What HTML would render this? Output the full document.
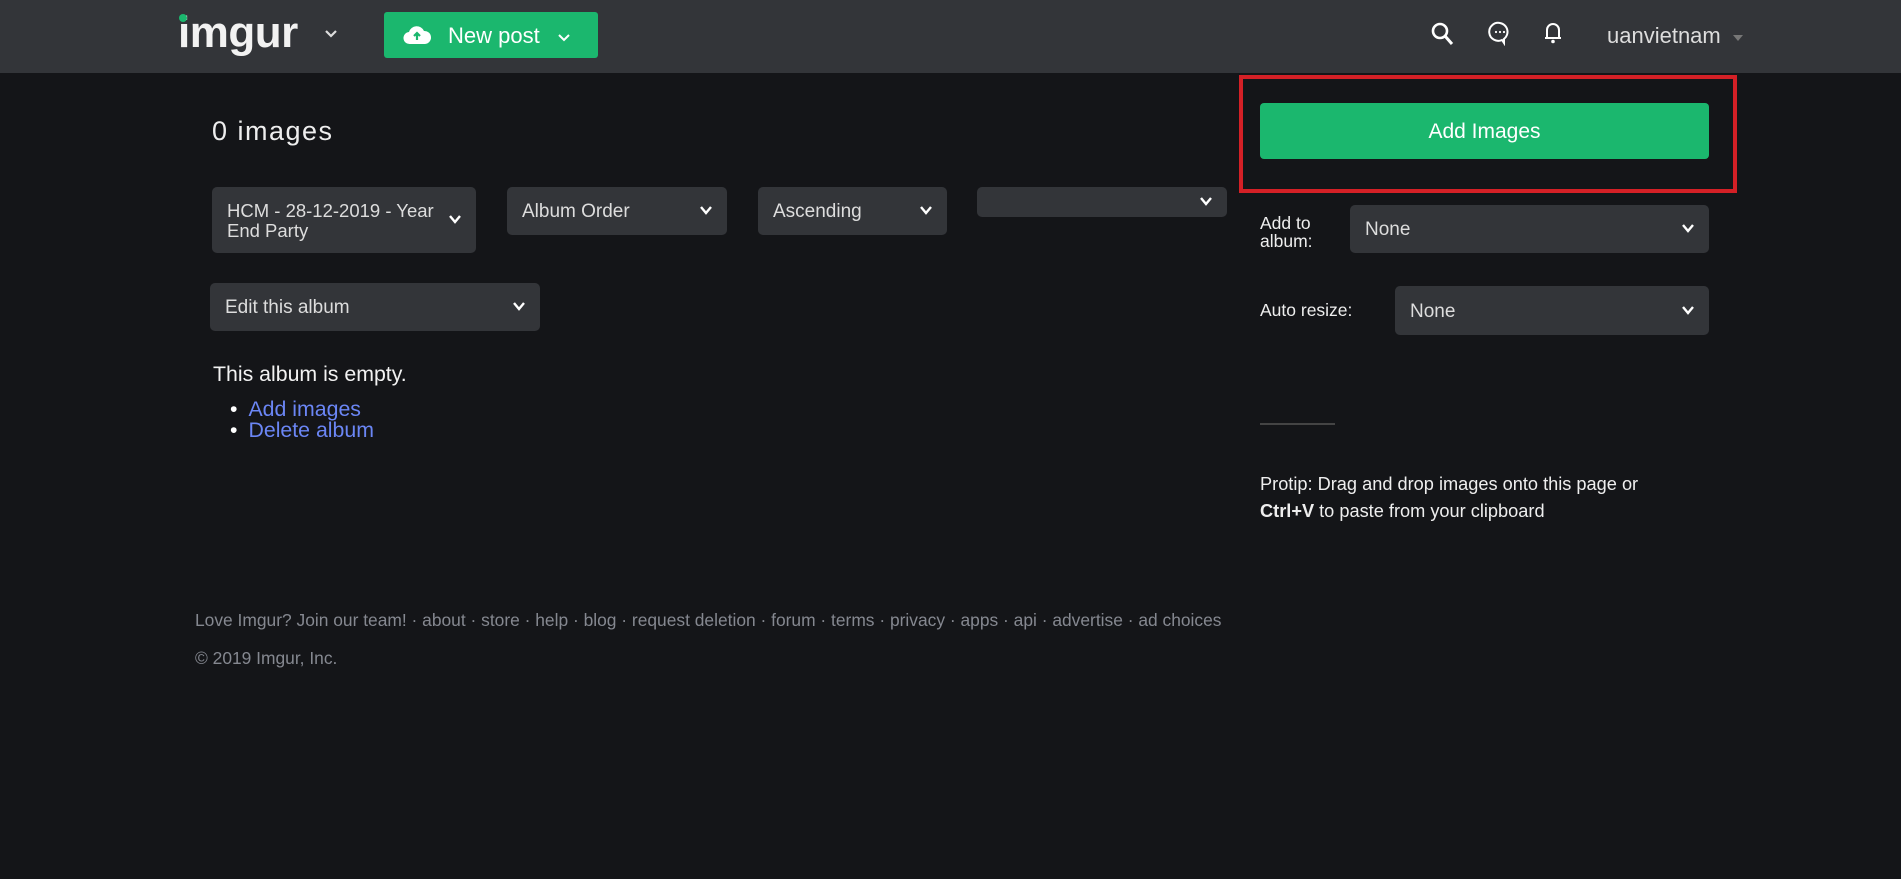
<!DOCTYPE html>
<html><head><meta charset="utf-8"><style>
*{box-sizing:border-box;margin:0;padding:0}
body{width:1901px;height:879px;background:#141518;font-family:"Liberation Sans",sans-serif;color:#fff;position:relative;overflow:hidden}
.a{position:absolute}
.hdr{left:0;top:0;width:1901px;height:73px;background:#333539}
.sel{position:absolute;background:#333539;border-radius:5px;color:#ddd;font-size:19px;padding-left:15px;padding-top:2px;display:flex;align-items:center}
.chev{position:absolute;right:14px;top:50%;margin-top:-6px}
.foot{color:#858890;font-size:17.4px}
a{color:#6b86f5;text-decoration:none}
</style></head><body>
<div class="a hdr"></div>
<div class="a" style="left:178px;top:8px;font-size:44px;font-weight:bold;letter-spacing:-0.5px;color:#f2f2f2">imgur</div>
<div class="a" style="left:179px;top:14px;width:8px;height:8px;border-radius:50%;background:#1bb76e"></div>
<svg class="a" style="left:324px;top:29px" width="14" height="10" viewBox="0 0 14 10"><path d="M2 2l5 5 5-5" stroke="#ddd" stroke-width="2.2" fill="none"/></svg>
<div class="a" style="left:384px;top:12px;width:214px;height:46px;background:#1bb76e;border-radius:3px"></div>
<svg class="a" style="left:402px;top:24px" width="30" height="22" viewBox="0 0 30 22"><path d="M8 20a6 6 0 0 1-1-12 8 8 0 0 1 15-1 6.5 6.5 0 0 1 1 13z" fill="#fff"/><path d="M15 16V9M12 12l3-3 3 3" stroke="#1bb76e" stroke-width="2.2" fill="none"/></svg>
<div class="a" style="left:448px;top:23px;font-size:22px;color:#fff">New post</div>
<svg class="a" style="left:558px;top:33px" width="12" height="9" viewBox="0 0 12 9"><path d="M1 2l5 5 5-5" stroke="#fff" stroke-width="2" fill="none"/></svg>
<svg class="a" style="left:1430px;top:21px" width="26" height="26" viewBox="0 0 26 26"><circle cx="10" cy="10" r="7" stroke="#fff" stroke-width="2.6" fill="none"/><path d="M15 15l7 8" stroke="#fff" stroke-width="3"/></svg>
<svg class="a" style="left:1487px;top:20px" width="26" height="26" viewBox="0 0 26 26"><path d="M13 3a9 9 0 1 0 2 17l2 3v-4a9 9 0 0 0-4-16z" stroke="#fff" stroke-width="2" fill="none"/><circle cx="9" cy="12" r="1.1" fill="#fff"/><circle cx="13" cy="12" r="1.1" fill="#fff"/><circle cx="17" cy="12" r="1.1" fill="#fff"/></svg>
<svg class="a" style="left:1542px;top:20px" width="22" height="26" viewBox="0 0 22 26"><path d="M5 18V10a6 6 0 0 1 12 0v8zM3 18h16" stroke="#fff" stroke-width="2" fill="none"/><circle cx="11" cy="21.5" r="1.8" fill="#fff"/></svg>
<div class="a" style="left:1607px;top:23px;font-size:22px;color:#ddd">uanvietnam</div>
<svg class="a" style="left:1733px;top:35px" width="10" height="6"><path d="M0 0h10L5 6z" fill="#777"/></svg>

<div class="a" style="left:212px;top:116px;font-size:27px;letter-spacing:1.5px;color:#eee">0 images</div>

<div class="sel" style="left:212px;top:187px;width:264px;height:66px;line-height:20px;font-size:18.5px">HCM - 28-12-2019 - Year<br>End Party<svg class="chev" width="14" height="10" viewBox="0 0 14 10"><path d="M2 2l5 6 5-6" stroke="#fff" stroke-width="2.4" fill="none"/></svg></div>
<div class="sel" style="left:507px;top:187px;width:220px;height:48px">Album Order<svg class="chev" width="14" height="10" viewBox="0 0 14 10"><path d="M2 2l5 6 5-6" stroke="#fff" stroke-width="2.4" fill="none"/></svg></div>
<div class="sel" style="left:758px;top:187px;width:189px;height:48px">Ascending<svg class="chev" width="14" height="10" viewBox="0 0 14 10"><path d="M2 2l5 6 5-6" stroke="#fff" stroke-width="2.4" fill="none"/></svg></div>
<div class="sel" style="left:977px;top:187px;width:250px;height:30px"><svg class="chev" width="14" height="10" viewBox="0 0 14 10"><path d="M2 2l5 6 5-6" stroke="#fff" stroke-width="2.4" fill="none"/></svg></div>
<div class="sel" style="left:210px;top:283px;width:330px;height:48px">Edit this album<svg class="chev" width="14" height="10" viewBox="0 0 14 10"><path d="M2 2l5 6 5-6" stroke="#fff" stroke-width="2.4" fill="none"/></svg></div>

<div class="a" style="left:213px;top:362px;font-size:21.3px;color:#f2f2f2">This album is empty.</div>
<div class="a" style="left:230px;top:399px;font-size:21.3px;line-height:21px">
<div><span style="color:#fff;margin-right:11px">•</span><a>Add images</a></div>
<div><span style="color:#fff;margin-right:11px">•</span><a>Delete album</a></div></div>

<div class="a" style="left:1239px;top:75px;width:498px;height:118px;border:4px solid #d42026"></div>
<div class="a" style="left:1260px;top:103px;width:449px;height:56px;background:#1bb76e;border-radius:4px;text-align:center;line-height:58px;font-size:21px;color:#fff">Add Images</div>
<div class="a" style="left:1260px;top:214px;font-size:17.5px;line-height:18px;color:#eee">Add to<br>album:</div>
<div class="sel" style="left:1350px;top:205px;width:359px;height:48px">None<svg class="chev" width="14" height="10" viewBox="0 0 14 10"><path d="M2 2l5 6 5-6" stroke="#fff" stroke-width="2.4" fill="none"/></svg></div>
<div class="a" style="left:1260px;top:300px;font-size:17.5px;color:#eee">Auto resize:</div>
<div class="sel" style="left:1395px;top:286px;width:314px;height:49px">None<svg class="chev" width="14" height="10" viewBox="0 0 14 10"><path d="M2 2l5 6 5-6" stroke="#fff" stroke-width="2.4" fill="none"/></svg></div>
<div class="a" style="left:1260px;top:423px;width:75px;height:2px;background:#444"></div>
<div class="a" style="left:1260px;top:471px;font-size:18.2px;line-height:27px;color:#eee">Protip: Drag and drop images onto this page or<br><b>Ctrl+V</b> to paste from your clipboard</div>

<div class="a foot" style="left:195px;top:610px;white-space:nowrap">Love Imgur? Join our team! · about · store · help · blog · request deletion · forum · terms · privacy · apps · api · advertise · ad choices</div>
<div class="a foot" style="left:195px;top:648px">© 2019 Imgur, Inc.</div>
</body></html>
